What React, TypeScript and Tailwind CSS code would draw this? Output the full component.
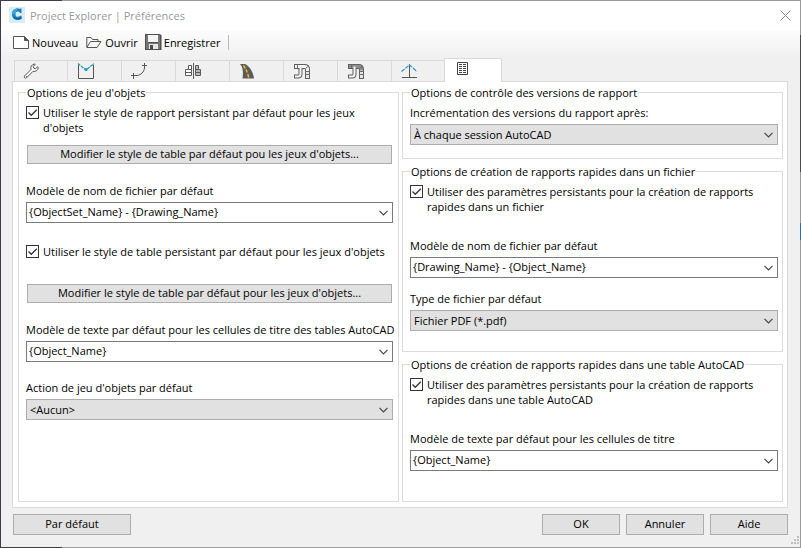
import { useId, type ReactNode } from "react";

interface ChildrenProps {
  children: ReactNode;
}

/* ---------- toolbar and title icons ---------- */

function AppLogo() {
  return (
    <svg width="16" height="16" viewBox="0 0 16 16" aria-hidden="true">
      <rect width="16" height="16" fill="#d9ebf7" />
      <path
        d="M12.500 1.500v4.500h-1.500C10.500 5 9.800 4.500 8.800 4.500 7.200 4.500 6.400 5.600 6.400 7.200s.9 2.600 2.500 2.600c1 0 1.700-.3 2.300-1h1.300v2.900c-1 .7-2.300 1.100-3.800 1.100C5.200 12.800 3 10.800 3 7.300S5.200 1.500 8.600 1.500c.9 0 1.600.1 2.300.5l.5-.5z"
        fill="#1482bd"
      />
      <path d="M3 7.300C3 3.800 5.200 1.500 8.600 1.500L7 4.900c-.5.600-.6 1.400-.6 2.300z" fill="#3ea6dc" />
      <path d="M3.600 9.800c.9 2 2.700 3 5.100 3 1.500 0 2.800-.4 3.800-1.100V9.900c-1.700 1.400-5.700 2-8.900-.1z" fill="#0b5c92" />
    </svg>
  );
}

function NewIcon() {
  return (
    <svg width="17" height="13" viewBox="0 0 17 13" fill="#fff" stroke="#555" aria-hidden="true">
      <path d="M.5.5h11l4 4v8H.5z" />
      <path d="M11.500.5v4h4z" fill="#555" />
    </svg>
  );
}

function OpenIcon() {
  return (
    <svg width="16" height="13" viewBox="0 0 16 13" fill="none" stroke="#555" aria-hidden="true">
      <path d="M.8 11V1.500H5l1.500 2h5.500V5.500M.8 11.500 4.500 5.500h10.500L11 11.500z" />
    </svg>
  );
}

function SaveIcon() {
  return (
    <svg width="17" height="16" viewBox="0 0 17 16" aria-hidden="true">
      <path d="M0 0h15l1.500 1.500V16H0z" fill="#4e4e4e" />
      <path d="M1 1h14v14H1z" fill="#777" />
      <path d="M3 1h10v7H3z" fill="#f4f4f4" />
      <path d="M3 8h10v1H3z" fill="#4e4e4e" />
      <path d="M4 10h9v5H4z" fill="#e6e6e6" />
      <path d="M5 11h3v4H5z" fill="#4a4a4a" />
    </svg>
  );
}

/* ---------- tab icons ---------- */

function WrenchIcon() {
  return (
    <svg width="18" height="18" viewBox="0 0 18 18" fill="#fff" stroke="#555" aria-hidden="true">
      <path d="M1.500 14 8 7.500C7.300 5 8.500 2.500 11.500 2l.7.3-2 2.200.6 1.700 1.800.5 2.200-2 .5.800c-.2 3-2.900 4.500-5.300 3.800l-6.500 6.500c-1.500.9-2.900-.4-2-1.800z" />
      <path d="M3 14.500h.8" />
    </svg>
  );
}

function SurfaceIcon() {
  return (
    <svg width="18" height="18" viewBox="0 0 18 18" fill="none" aria-hidden="true">
      <path d="M1.500 2.500v14h15v-14" stroke="#555" />
      <path d="M1 1.500 9 8l8-6.500" stroke="#1d96c8" strokeWidth="1.200" strokeDasharray="3 1" />
      <circle cx="9" cy="7.500" r="1.600" fill="#1d96c8" />
    </svg>
  );
}

function AlignmentIcon() {
  return (
    <svg width="18" height="18" viewBox="0 0 18 18" fill="none" stroke="#555" aria-hidden="true">
      <path d="M0 13.500h6M2.500 11v6M11 3.500h5M13.500 1v5" />
      <path d="M6 13.500c4-.5 7-3.500 7.500-7.500" />
    </svg>
  );
}

function ProfileIcon() {
  return (
    <svg width="18" height="18" viewBox="0 0 18 18" fill="#fff" stroke="#5c5c5c" aria-hidden="true">
      <path d="M8.500 1v16" />
      <path d="M6.500 3.500h-3v4h-3v6h6zM.5 10.500h6M3.500 7.500h3" />
      <path d="M10.500 3.500h3v4h2v6h-5zM10.500 10.500h5M10.500 7.500h3" fill="#b5b5b5" />
    </svg>
  );
}

function RoadIcon() {
  return (
    <svg width="18" height="18" viewBox="0 0 18 18" aria-hidden="true">
      <path d="M1 2h5c5 2.500 8 8 9 14.500H3.500C4.500 10 4 5.500 1 2z" fill="#5b5b5b" />
      <path d="m4.500 3.500 1.800 3M7 7.500l1.200 3M8.800 12l.9 3.500" stroke="#f5b921" strokeWidth="1.500" />
    </svg>
  );
}

// Two bent pipes: each a dark line with a lighter, narrower one on top
function PipeIcon({ shaded = false }: { shaded?: boolean }) {
  return (
    <svg width="18" height="18" viewBox="0 0 18 18" fill="none" strokeLinejoin="round" aria-hidden="true">
      <path d="M7.500 4.500v7.500q0 2.500-2.500 2.500H1" stroke="#5f5f5f" strokeWidth="4" />
      <path d="M1 4.500h10.500q3 0 3 3V17" stroke="#5f5f5f" strokeWidth="5" />
      <path d="M2 4.500h9.500q3 0 3 3V16" stroke={shaded ? "#8e8e8e" : "#f6f6f6"} strokeWidth="3" />
      <path d="M7.500 4.500v7.500q0 2.500-2.500 2.500H2" stroke="#f6f6f6" strokeWidth="2" />
      <path d="M14.500 8.500V16" stroke="#e6e6e6" strokeWidth="3" />
      <path d="M4.500 3v3M12.500 6.500l3-2.500M12 9.500h5M12 12.500h5" stroke="#6a6a6a" />
    </svg>
  );
}

function SectionIcon() {
  return (
    <svg width="18" height="18" viewBox="0 0 18 18" fill="none" aria-hidden="true">
      <path d="M8.500 2v14M1 15.500h15" stroke="#555" />
      <path d="M.5 9.500 8.500 3l7.500 6.500" stroke="#2a94d6" strokeWidth="1.200" strokeDasharray="4 1" />
    </svg>
  );
}

function ReportIcon() {
  return (
    <svg width="11" height="13" viewBox="0 0 11 13" fill="none" stroke="#444" aria-hidden="true">
      <path d="M.5.5h10v12H.5z" />
      <path d="M2 2.500h3M6 2.500h3M2 4.500h3M6 4.500h3M2 6.500h3M6 6.500h3M2 8.500h3M6 8.500h3M2 10.500h3M6 10.500h3" />
    </svg>
  );
}

function Chevron() {
  return (
    <svg width="9" height="6" viewBox="0 0 9 6" fill="none" stroke="#444" strokeWidth="1.200" aria-hidden="true">
      <path d="m.5.800 4 4 4-4" />
    </svg>
  );
}

/* ---------- form controls ---------- */

function Group({ title, className = "", children }: ChildrenProps & { title: string; className?: string }) {
  return (
    <fieldset className={`min-w-0 border border-[#dcdcdc] pl-[7px] ${className}`}>
      <legend className="px-px leading-[15px]">{title}</legend>
      <div className="flex flex-col pt-[5px]">{children}</div>
    </fieldset>
  );
}

function Check({ className = "", children }: ChildrenProps & { className?: string }) {
  return (
    <label className={`flex items-start gap-1 whitespace-nowrap ${className}`}>
      <span className="mt-px grid shrink-0">
        <input
          type="checkbox"
          defaultChecked
          className="col-start-1 row-start-1 size-[13px] appearance-none border border-[#333] bg-white"
        />
        <svg
          width="13"
          height="13"
          viewBox="0 0 13 13"
          fill="none"
          stroke="#333"
          strokeWidth="1.300"
          className="pointer-events-none col-start-1 row-start-1"
          aria-hidden="true"
        >
          <path d="m2.500 6.500 2.800 2.800 5.500-5.500" />
        </svg>
      </span>
      <span>{children}</span>
    </label>
  );
}

function Combo({ label, value, className = "" }: { label: string; value: string; className?: string }) {
  const id = useId();
  return (
    <div className={`flex flex-col gap-1 ${className}`}>
      <label htmlFor={id} className="whitespace-nowrap">
        {label}
      </label>
      <div className="flex h-[21px] border border-[#7a7a7a] bg-white">
        <input id={id} type="text" defaultValue={value} className="min-w-0 flex-1 px-0.5 pb-0.5 outline-none" />
        <button type="button" aria-label="Ouvrir la liste" className="flex w-[17px] items-center justify-center">
          <Chevron />
        </button>
      </div>
    </div>
  );
}

function Dropdown({ label, value, className = "" }: { label: string; value: string; className?: string }) {
  const id = useId();
  return (
    <div className={`flex flex-col gap-1 ${className}`}>
      <label htmlFor={id} className="whitespace-nowrap">
        {label}
      </label>
      <div className="grid h-[21px] items-center">
        <select
          id={id}
          className="col-start-1 row-start-1 h-full w-full appearance-none border border-[#adadad] bg-[#e1e1e1] px-[3px]"
        >
          <option>{value}</option>
        </select>
        <span className="pointer-events-none col-start-1 row-start-1 justify-self-end pr-[5px]">
          <Chevron />
        </span>
      </div>
    </div>
  );
}

function Button({ className = "", children }: ChildrenProps & { className?: string }) {
  return (
    <button
      type="button"
      className={`flex items-center justify-center border border-[#adadad] bg-[#e1e1e1] pb-0.5 ${className}`}
    >
      {children}
    </button>
  );
}

const tabs = [
  { name: "Surfaces", icon: <SurfaceIcon /> },
  { name: "Axes", icon: <AlignmentIcon /> },
  { name: "Profils", icon: <ProfileIcon /> },
  { name: "Projets 3D", icon: <RoadIcon /> },
  { name: "Réseaux gravitaires", icon: <PipeIcon /> },
  { name: "Réseaux sous pression", icon: <PipeIcon shaded /> },
  { name: "Sections", icon: <SectionIcon /> },
];

export default function App() {
  return (
    <div className="flex min-h-screen bg-[linear-gradient(to_right,#3c3c48_62px,#9b9b9b_62px)] py-px pl-px font-['Open_Sans','Noto_Sans',sans-serif] text-[11px] leading-[15px] text-black">
      <div className="flex min-w-0 grow flex-col bg-[#f0f0f0]">
        {/* TITLE BAR */}
        <header className="flex h-[30px] items-center bg-white pr-2 pb-0.5 pl-2">
          <AppLogo />
          <h1 className="ml-[5px] flex-1 text-[#999]">Project Explorer | Préférences</h1>
          <button type="button" aria-label="Fermer">
            <svg width="12" height="11" viewBox="0 0 12 11" stroke="#888" aria-hidden="true">
              <path d="m.5.500 10 10M10.500.500l-10 10" />
            </svg>
          </button>
        </header>

        {/* TOOLBAR */}
        <div
          className="flex h-[27px] items-center bg-linear-to-b from-[#fcfcfc] to-[#f0f0f0] pb-[5px] pl-3"
          role="toolbar"
        >
          <button type="button" className="flex items-center gap-0.5">
            <NewIcon />
            Nouveau
          </button>
          <button type="button" className="ml-2 flex items-center gap-[3px]">
            <OpenIcon />
            Ouvrir
          </button>
          <button type="button" className="ml-[7px] flex items-center gap-0.5">
            <SaveIcon />
            Enregistrer
          </button>
          <span className="ml-2 h-[15px] w-px bg-[#b8b8b8]" />
        </div>

        {/* TABS */}
        <div className="z-10 -mb-px flex items-end pl-[13px]" role="tablist">
          <button
            type="button"
            role="tab"
            aria-label="Général"
            className="flex h-[22px] w-[53px] items-center border border-r-0 border-[#d9d9d9] bg-[#f0f0f0] pl-2"
          >
            <WrenchIcon />
          </button>
          {tabs.map((tab) => (
            <button
              key={tab.name}
              type="button"
              role="tab"
              aria-label={tab.name}
              className="flex h-[22px] w-[54px] items-center border border-r-0 border-[#d9d9d9] bg-[#f0f0f0] pl-[9px]"
            >
              {tab.icon}
            </button>
          ))}
          <button
            type="button"
            role="tab"
            aria-label="Rapports"
            aria-selected="true"
            className="-ml-px flex h-6 w-[58px] items-start border border-b-0 border-[#d9d9d9] bg-white pt-[3px] pl-3"
          >
            <ReportIcon />
          </button>
        </div>

        {/* PANEL */}
        <main className="mr-3 ml-[11px] grid grow grid-cols-2 gap-[3px] border border-[#d9d9d9] bg-white pt-[3px] pr-1 pb-[5px] pl-[5px]">
          <Group title="Options de jeu d'objets" className="pr-[5px]">
            <Check>
              Utiliser le style de rapport persistant par défaut pour les jeux
              <br />
              d'objets
            </Check>
            <Button className="mx-px mt-2.5 h-[19px]">
              Modifier le style de table par défaut pou les jeux d'objets...
            </Button>
            <Combo
              label="Modèle de nom de fichier par défaut"
              value="{ObjectSet_Name} - {Drawing_Name}"
              className="mt-[19px]"
            />
            <Check className="mt-[21px]">Utiliser le style de table persistant par défaut pour les jeux d'objets</Check>
            <Button className="mx-px mt-[25px] h-[19px]">
              Modifier le style de table par défaut pour les jeux d'objets...
            </Button>
            <Combo
              label="Modèle de texte par défaut pour les cellules de titre des tables AutoCAD"
              value="{Object_Name}"
              className="mt-[19px]"
            />
            <Dropdown label="Action de jeu d'objets par défaut" value="<Aucun>" className="mt-[18px]" />
          </Group>

          <div className="flex min-w-0 flex-col gap-[5px]">
            <Group title="Options de contrôle des versions de rapport" className="pr-1 pb-[13px]">
              <Dropdown label="Incrémentation des versions du rapport après:" value="À chaque session AutoCAD" />
            </Group>

            <Group title="Options de création de rapports rapides dans un fichier" className="pr-1 pb-5">
              <Check>
                Utiliser des paramètres persistants pour la création de rapports
                <br />
                rapides dans un fichier
              </Check>
              <Combo
                label="Modèle de nom de fichier par défaut"
                value="{Drawing_Name} - {Object_Name}"
                className="mt-6"
              />
              <Dropdown label="Type de fichier par défaut" value="Fichier PDF (*.pdf)" className="mt-[13px]" />
            </Group>

            <Group title="Options de création de rapports rapides dans une table AutoCAD" className="grow pr-1">
              <Check>
                Utiliser des paramètres persistants pour la création de rapports
                <br />
                rapides dans une table AutoCAD
              </Check>
              <Combo
                label="Modèle de texte par défaut pour les cellules de titre"
                value="{Object_Name}"
                className="mt-6"
              />
            </Group>
          </div>
        </main>

        {/* FOOTER */}
        <footer className="relative flex gap-1.5 pt-1.5 pr-3 pb-3 pl-3">
          <Button className="mr-auto h-[21px] w-[118px]">Par défaut</Button>
          <Button className="h-[21px] w-[78px]">OK</Button>
          <Button className="h-[21px] w-[78px]">Annuler</Button>
          <Button className="h-[21px] w-[78px]">Aide</Button>
          <svg width="9" height="9" viewBox="0 0 9 9" fill="#bfbfbf" className="absolute right-0 bottom-0.5" aria-hidden="true">
            <path d="M6 0h2v2H6zM3 3h2v2H3zM6 3h2v2H6zM0 6h2v2H0zM3 6h2v2H3zM6 6h2v2H6z" />
          </svg>
        </footer>
      </div>

      {/* Sliver of the desktop along the right edge */}
      <div className="flex w-px flex-col">
        <div className="grow-2 basis-0 bg-[#9b9b9b]" />
        <div className="grow-8 basis-0 bg-[#4a4a4a]" />
        <div className="grow-3 basis-0 bg-[#9b9b9b]" />
        <div className="grow basis-0 bg-[#2f6fa3]" />
        <div className="grow-18 basis-0 bg-[#9b9b9b]" />
      </div>
    </div>
  );
}
